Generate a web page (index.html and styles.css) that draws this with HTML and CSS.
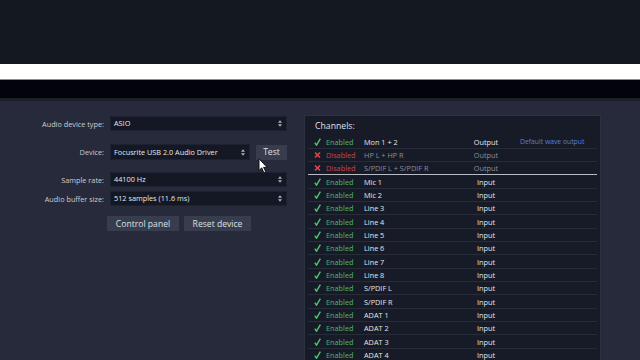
FILE: index.html
```html
<!DOCTYPE html>
<html lang="en">
<head>
    <meta charset="UTF-8">
    <meta name="viewport" content="width=device-width, initial-scale=1.0">
    <title>Audio Settings</title>

    <link rel="stylesheet" href="styles.css">
</head>
<body>
    <div class="topbar"></div>
    <div class="whitebar"></div>
    <div class="blackbar"></div>

    <main class="content">
        <div class="settings">
            <div class="row row-type">
                <label>Audio device type:</label>
                <div class="select wide">ASIO<svg class="arrows" viewBox="0 0 5 8"><path d="M2.5 0 L5 3 H0 Z M2.5 8 L5 5 H0 Z"/></svg></div>
            </div>
            <div class="row row-device">
                <label>Device:</label>
                <div class="select device">Focusrite USB 2.0 Audio Driver<svg class="arrows" viewBox="0 0 5 8"><path d="M2.5 0 L5 3 H0 Z M2.5 8 L5 5 H0 Z"/></svg></div>
                <button class="btn test">Test</button>
            </div>
            <div class="row row-rate">
                <label>Sample rate:</label>
                <div class="select wide">44100 Hz<svg class="arrows" viewBox="0 0 5 8"><path d="M2.5 0 L5 3 H0 Z M2.5 8 L5 5 H0 Z"/></svg></div>
            </div>
            <div class="row row-buffer">
                <label>Audio buffer size:</label>
                <div class="select wide">512 samples (11.6 ms)<svg class="arrows" viewBox="0 0 5 8"><path d="M2.5 0 L5 3 H0 Z M2.5 8 L5 5 H0 Z"/></svg></div>
            </div>
            <div class="actions">
                <button class="btn">Control panel</button>
                <button class="btn">Reset device</button>
            </div>
        </div>

        <div class="channels">
            <h3>Channels:</h3>
            <div id="channelList"></div>
        </div>
    </main>

    <svg class="cursor" viewBox="0 0 12 18"><path d="M1 1 L1 14 L4 11 L6.5 16.5 L8.5 15.5 L6 10.5 L10 10.5 Z"/></svg>

    <script>
        // Channel list data
        const channels = [
            [true, "Mon 1 + 2", "Output", "Default wave output"],
            [false, "HP L + HP R", "Output", ""],
            [false, "S/PDIF L + S/PDIF R", "Output", ""],
            [true, "Mic 1", "Input", ""],
            [true, "Mic 2", "Input", ""],
            [true, "Line 3", "Input", ""],
            [true, "Line 4", "Input", ""],
            [true, "Line 5", "Input", ""],
            [true, "Line 6", "Input", ""],
            [true, "Line 7", "Input", ""],
            [true, "Line 8", "Input", ""],
            [true, "S/PDIF L", "Input", ""],
            [true, "S/PDIF R", "Input", ""],
            [true, "ADAT 1", "Input", ""],
            [true, "ADAT 2", "Input", ""],
            [true, "ADAT 3", "Input", ""],
            [true, "ADAT 4", "Input", ""]
        ];

        const checkIcon = '<svg viewBox="0 0 7 8"><path d="M0.8 4.6 L2.5 7.2 L6.4 0.6" fill="none" stroke="#4fc46c" stroke-width="1.4"/></svg>';
        const crossIcon = '<svg viewBox="0 0 7 8"><path d="M1 1.5 L6 6.5 M6 1.5 L1 6.5" fill="none" stroke="#e0454f" stroke-width="1.6"/></svg>';

        const list = document.getElementById("channelList");
        channels.forEach((ch, i) => {
            let row = document.createElement("div");
            row.className = "channel" + (ch[0] ? "" : " disabled");
            if (i === 2) row.classList.add("group-end");
            row.innerHTML =
                '<span class="icon">' + (ch[0] ? checkIcon : crossIcon) + '</span>' +
                '<span class="status">' + (ch[0] ? "Enabled" : "Disabled") + '</span>' +
                '<span class="name">' + ch[1] + '</span>' +
                '<span class="kind">' + ch[2] + '</span>' +
                '<span class="extra">' + ch[3] + '</span>';
            list.appendChild(row);
        });
    </script>
</body>
</html>
```

FILE: styles.css
```css
* {
    margin: 0;
    padding: 0;
    box-sizing: border-box;
    font-family: "Open Sans", "Liberation Sans", sans-serif;
}

body {
    width: 640px;
    height: 360px;
    overflow: hidden;
    background-color: #262a3a;
    position: relative;
}

/* Top bands */
.topbar {
    height: 64px;
    background-color: #141820;
}

.whitebar {
    height: 16px;
    background-color: #fff;
    border-bottom: 1px solid #8a8c92;
}

.blackbar {
    height: 21px;
    background-color: #03040b;
    border-bottom: 3px solid #1c2029;
}

.content {
    display: flex;
    padding-top: 15px;
}

/* Left settings */
.settings {
    width: 287px;
    display: flex;
    flex-direction: column;
}

.row {
    display: flex;
    align-items: center;
    gap: 6px;
}

.row label {
    width: 104px;
    text-align: right;
    color: #c9ccd4;
    font-size: 7.3px;
}

.row-device { margin-top: 13px; }
.row-rate { margin-top: 12px; }
.row-buffer { margin-top: 4px; }

.select {
    position: relative;
    height: 15px;
    background-color: #141824;
    border: 1px solid #1d2130;
    color: #e6e8ec;
    font-size: 7.3px;
    line-height: 13px;
    padding-left: 3px;
}

.select.wide { width: 177px; }

.select.device {
    width: 140px;
    height: 16px;
    line-height: 14px;
}

.arrows {
    position: absolute;
    right: 4px;
    top: 3px;
    width: 4px;
    height: 7px;
    fill: #aeb2bc;
}

.device .arrows { top: 4px; }

.btn {
    height: 15px;
    padding: 0 8px;
    background-color: #383d4d;
    border: none;
    color: #dde0e6;
    font-size: 8.6px;
}

.btn.test {
    width: 31px;
    padding: 0;
}

.actions {
    display: flex;
    gap: 5px;
    margin-top: 10px;
    margin-left: 107px;
}

.actions .btn:first-child { width: 72px; }
.actions .btn:last-child { width: 67px; }

/* Channels panel */
.channels {
    margin-left: 17px;
    margin-top: -1px;
    width: 297px;
    height: 260px;
    background-color: #171b27;
    border: 1px solid #2c3142;
    padding: 0 3px;
}

.channels h3 {
    font-weight: normal;
    font-size: 8.7px;
    color: #dfe2e8;
    padding: 4px 0 0 7px;
    height: 19.5px;
}

.channel {
    display: grid;
    grid-template-columns: 12px 38px 98px 48px 1fr;
    align-items: center;
    height: 13.33px;
    padding-left: 6px;
    border-bottom: 1px solid #282c39;
    font-size: 7.3px;
    color: #e4e6ea;
}

.channel.group-end {
    border-bottom: 1px solid #b9bcc4;
}

.icon svg {
    width: 7px;
    height: 8px;
    display: block;
}

.status { color: #55b56f; }

.disabled .status { color: #c44751; }
.disabled .name,
.disabled .kind { color: #8b8f9a; }

.kind { text-align: center; }

.extra {
    padding-left: 10px;
    color: #5a7fd6;
    font-size: 6.8px;
}

/* Mouse pointer */
.cursor {
    position: absolute;
    left: 258px;
    top: 158px;
    width: 11px;
    height: 16px;
    fill: #fff;
    stroke: #000;
    stroke-width: 0.9;
}
```
